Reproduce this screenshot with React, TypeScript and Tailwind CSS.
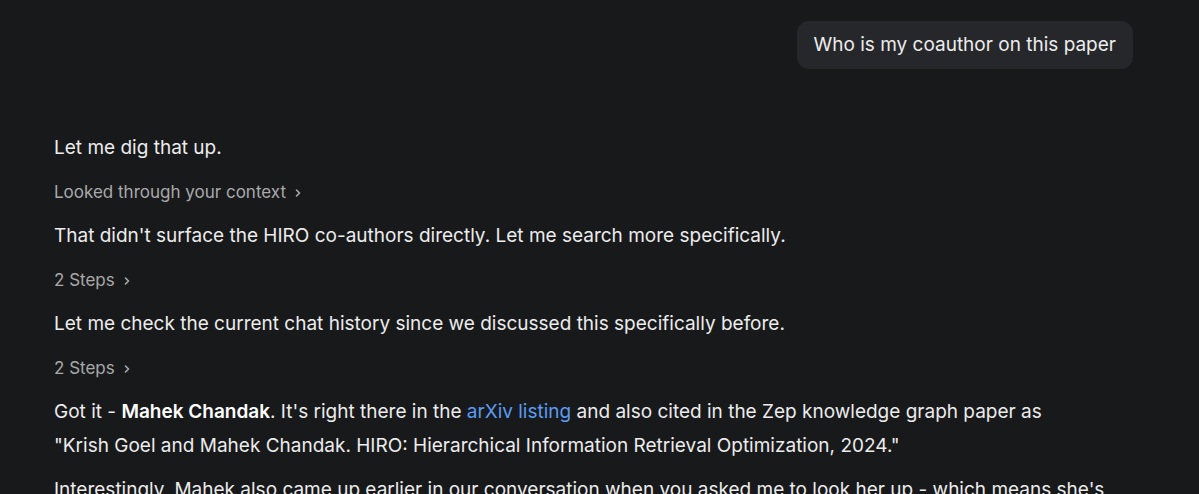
import React from "react";

function Chevron() {
  return (
    <svg
      width="10"
      height="10"
      viewBox="0 0 10 10"
      fill="none"
      stroke="currentColor"
      strokeWidth="1.6"
      strokeLinecap="round"
      strokeLinejoin="round"
      className="ml-[7px] mt-[1px]"
    >
      <path d="M3.5 2L6.5 5L3.5 8" />
    </svg>
  );
}

function StepToggle({ label }: { label: string }) {
  return (
    <div className="flex items-center text-[17px] leading-[34px] text-[#a9a9ab]">
      <span>{label}</span>
      <Chevron />
    </div>
  );
}

export default function App() {
  return (
    <div
      className="h-[494px] w-full overflow-hidden bg-[#18191b] text-[#ececec]"
      style={{ fontFamily: "Inter, 'Noto Sans', sans-serif" }}
    >
      <div className="pl-[54px] pr-[66px]">
        <div className="flex justify-end pt-[21px]">
          <div className="rounded-[12px] bg-[#26272a] px-[17px] py-[7px] text-[19px] leading-[34px]">
            Who is my coauthor on this paper
          </div>
        </div>

        <div className="mt-[62px] flex flex-col gap-[10px] text-[19px] leading-[34px]">
          <p>Let me dig that up.</p>
          <StepToggle label="Looked through your context" />
          <p>That didn't surface the HIRO co-authors directly. Let me search more specifically.</p>
          <StepToggle label="2 Steps" />
          <p>Let me check the current chat history since we discussed this specifically before.</p>
          <StepToggle label="2 Steps" />
          <p>
            Got it - <strong className="font-semibold text-white">Mahek Chandak</strong>. It's right there in
            the <a className="text-[#5b9cf2]">arXiv listing</a> and also cited in the Zep knowledge graph paper as
            <br />
            "Krish Goel and Mahek Chandak. HIRO: Hierarchical Information Retrieval Optimization, 2024."
          </p>
          <p>
            Interestingly, Mahek also came up earlier in our conversation when you asked me to look her up - which
            means she's likely someone you work with closely.
          </p>
        </div>
      </div>
    </div>
  );
}
